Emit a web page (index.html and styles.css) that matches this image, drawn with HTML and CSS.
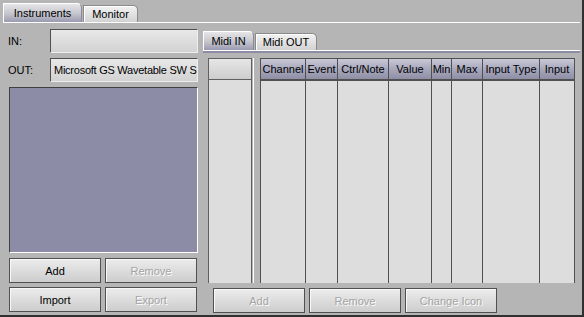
FILE: index.html
```
<!DOCTYPE html>
<html lang="en">
<head>
    <meta charset="UTF-8">
    <title>Instruments</title>
    <link rel="stylesheet" href="styles.css">
</head>
<body>

    <div class="window">
        <!-- Top tabs -->
        <div class="tabs">
            <div class="tab active tab-instruments">Instruments</div>
            <div class="tab tab-monitor">Monitor</div>
        </div>
        <div class="tabline"></div>

        <div class="page">
            <!-- Instrument list side -->
            <div class="left">
                <div class="row">
                    <div class="label">IN:</div>
                    <div class="field"></div>
                </div>
                <div class="row">
                    <div class="label">OUT:</div>
                    <div class="field">Microsoft GS Wavetable SW S</div>
                </div>
                <div class="list"></div>
                <div class="btns">
                    <button class="btn">Add</button>
                    <button class="btn" disabled>Remove</button>
                </div>
                <div class="btns">
                    <button class="btn">Import</button>
                    <button class="btn" disabled>Export</button>
                </div>
            </div>

            <!-- Midi mapping side -->
            <div class="right">
                <div class="tabs">
                    <div class="tab active tab-midi-in">Midi IN</div>
                    <div class="tab tab-midi-out">Midi OUT</div>
                </div>
                <div class="tabline"></div>

                <div class="tables">
                    <div class="side-table">
                        <div class="side-head"></div>
                        <div class="side-body"></div>
                    </div>
                    <div class="splitter"></div>
                    <div class="grid">
                        <div class="th">Channel</div>
                        <div class="th">Event</div>
                        <div class="th">Ctrl/Note</div>
                        <div class="th">Value</div>
                        <div class="th">Min</div>
                        <div class="th">Max</div>
                        <div class="th">Input Type</div>
                        <div class="th">Input</div>
                        <div class="td"></div>
                        <div class="td"></div>
                        <div class="td"></div>
                        <div class="td"></div>
                        <div class="td"></div>
                        <div class="td"></div>
                        <div class="td"></div>
                        <div class="td"></div>
                    </div>
                </div>

                <div class="btns bottom-btns">
                    <button class="btn" disabled>Add</button>
                    <button class="btn" disabled>Remove</button>
                    <button class="btn" disabled>Change Icon</button>
                </div>
            </div>
        </div>
    </div>

</body>
</html>
```

FILE: styles.css
```
body {
    margin: 0;
    padding: 0;
    font-family: "Liberation Sans", Arial, sans-serif;
    font-size: 11px;
    color: black;
    background-color: #b5b5b5;
}

.window {
    width: 584px;
    height: 317px;
    box-sizing: border-box;
    padding: 3px 2px 0 3px;
    background-color: #b5b5b5;
    border-right: 2px solid #303030;
    border-bottom: 2px solid #303030;
    display: flex;
    flex-direction: column;
    overflow: hidden;
}

/* Tabs */
.tabs {
    display: flex;
    align-items: flex-end;
    height: 19px;
    gap: 1px;
}

.tab {
    height: 17px;
    box-sizing: border-box;
    line-height: 17px;
    text-align: center;
    border: 1px solid #8a8a8a;
    border-bottom: none;
    border-top-right-radius: 5px;
    background: linear-gradient(#f2f2f2, #d2d2d2);
    box-shadow: inset 1px 1px #ffffff;
}

.tab.active {
    height: 19px;
    line-height: 19px;
    border-color: #ffffff #8a8a9a #ffffff #ffffff;
    background: linear-gradient(#e6e6e8, #c4c4cc 55%, #9a9ab2);
    box-shadow: none;
}

.tab-instruments { width: 79px; }
.tab-monitor { width: 55px; }
.tab-midi-in { width: 51px; }
.tab-midi-out { width: 62px; }

.tabline {
    height: 3px;
    box-sizing: border-box;
    border-top: 1px solid #ffffff;
    background-color: #8c8ca4;
}

.page {
    flex: 1;
    display: flex;
}

/* Left side */
.left {
    width: 189px;
    margin-left: 6px;
    padding-top: 6px;
    display: flex;
    flex-direction: column;
}

.row {
    display: flex;
    height: 24px;
    margin-bottom: 5px;
}

.label {
    width: 42px;
    margin-left: -1px;
    line-height: 24px;
}

.field {
    width: 148px;
    box-sizing: border-box;
    border-top: 1px solid #505050;
    border-left: 1px solid #505050;
    border-bottom: 1px solid #eeeeee;
    border-right: 1px solid #eeeeee;
    background: linear-gradient(#e8e8e8, #d2d2d2);
    padding-left: 3px;
    line-height: 22px;
    letter-spacing: -0.25px;
    white-space: nowrap;
    overflow: hidden;
}

.list {
    height: 166px;
    box-sizing: border-box;
    border-top: 1px solid #404040;
    border-left: 1px solid #404040;
    border-bottom: 1px solid #ffffff;
    border-right: 1px solid #ffffff;
    background-color: #8c8ca6;
    margin-bottom: 5px;
}

.btns {
    display: flex;
    gap: 4px;
    margin-bottom: 4px;
}

.btn {
    width: 92px;
    height: 25px;
    box-sizing: border-box;
    padding: 0;
    font-family: "Liberation Sans", Arial, sans-serif;
    font-size: 11px;
    color: black;
    border: 1px solid #505050;
    background: linear-gradient(#ececec, #cdcdcd);
    box-shadow: inset 1px 1px #f8f8f8;
    border-radius: 0;
}

.btn:disabled {
    color: #a4a4a4;
    text-shadow: 1px 1px 0 #ffffff;
}

/* Right side */
.right {
    width: 377px;
    margin-left: 5px;
    padding-top: 8px;
    display: flex;
    flex-direction: column;
}

.tables {
    display: flex;
    height: 225px;
    margin-top: 5px;
    margin-left: 5px;
}

.side-table {
    width: 44px;
    box-sizing: border-box;
    border-left: 1px solid #606060;
    border-right: 1px solid #606060;
    display: flex;
    flex-direction: column;
}

.side-head {
    height: 22px;
    box-sizing: border-box;
    border-top: 1px solid #606060;
    border-bottom: 1px solid #606060;
    background: linear-gradient(#e6e6e6, #cdcdcd);
}

.side-body {
    flex: 1;
    background-color: #dddddd;
}

.splitter {
    width: 8px;
    box-sizing: border-box;
    border-left: 1px solid #b5b5b5;
    border-right: 6px solid #b5b5b5;
    background-color: #ffffff;
}

.grid {
    width: 315px;
    box-sizing: border-box;
    border-left: 1px solid #505050;
    display: grid;
    grid-template-columns: 45px 32px 51px 43px 20px 31px 57px 35px;
    grid-template-rows: 23px 1fr;
}

.th {
    box-sizing: border-box;
    border-top: 1px solid #505050;
    border-right: 1px solid #505050;
    border-bottom: 2px solid #505050;
    background: linear-gradient(#c8c8d6, #a2a2b8 60%, #8e8ea6);
    text-align: center;
    line-height: 20px;
    white-space: nowrap;
    overflow: hidden;
}

.td {
    border-right: 1px solid #505050;
    background-color: #dddddd;
}

.bottom-btns {
    margin-top: 5px;
    margin-left: 10px;
}
```
